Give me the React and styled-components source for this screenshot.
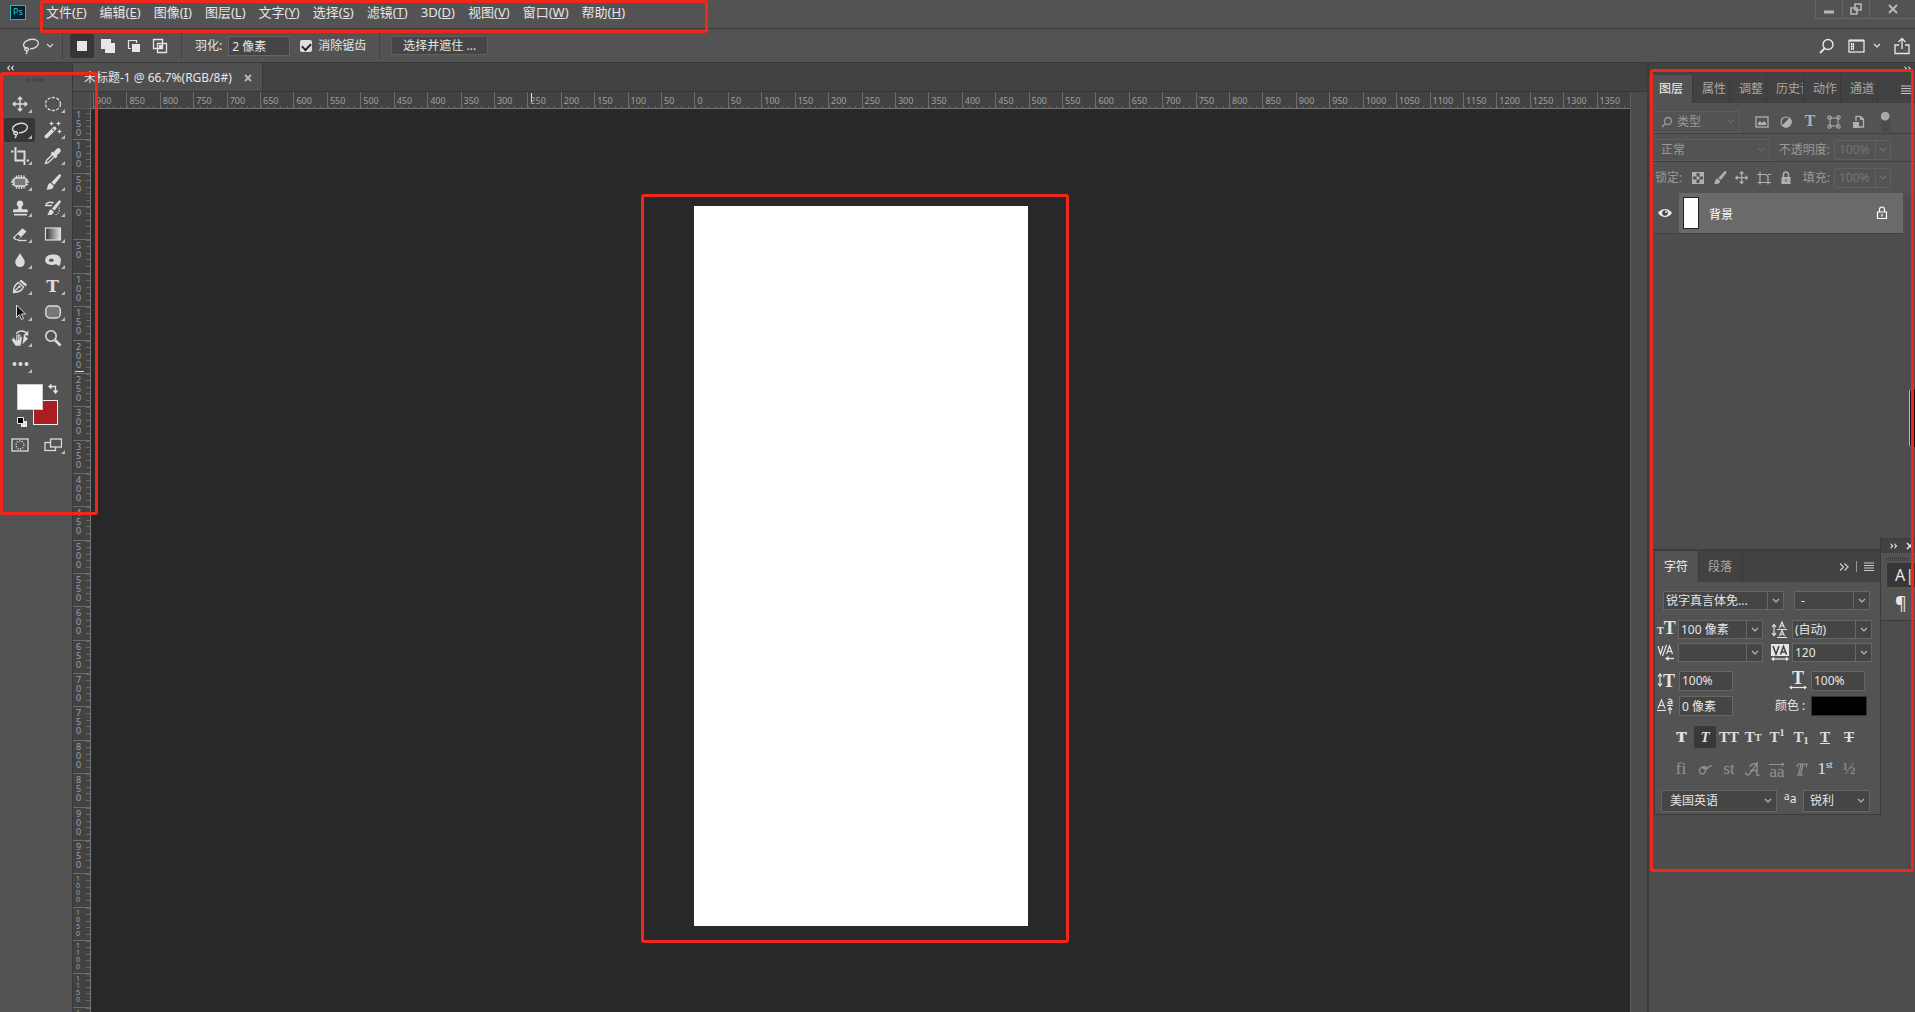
import React, { useState } from "react";
import styled, { createGlobalStyle, css } from "styled-components";

const GlobalStyle = createGlobalStyle`
  * {
    box-sizing: border-box;
  }
  body {
    margin: 0;
    background: #282828;
    color: #e6e6e6;
    font-family: "Noto Sans", "Noto Sans CJK SC", sans-serif;
    font-size: 12px;
    line-height: 16px;
  }
  button, input, select {
    margin: 0;
    padding: 0;
    border: 0;
    border-radius: 0;
    background: none;
    color: inherit;
    font: inherit;
  }
  svg {
    display: block;
    flex: none;
  }
`;

const menus = [
  ["文件", "F"],
  ["编辑", "E"],
  ["图像", "I"],
  ["图层", "L"],
  ["文字", "Y"],
  ["选择", "S"],
  ["滤镜", "T"],
  ["3D", "D"],
  ["视图", "V"],
  ["窗口", "W"],
  ["帮助", "H"],
];

const horizontalMarks = Array.from({ length: 46 }, (_, i) => Math.abs(i - 18) * 50);
const verticalMarks = Array.from({ length: 28 }, (_, i) => Math.abs(i - 3) * 50);

const Icon = ({ w = 18, h = w, children }) => (
  <svg
    width={w}
    height={h}
    viewBox={`0 0 ${w} ${h}`}
    fill="none"
    stroke="currentColor"
    aria-hidden="true"
  >
    {children}
  </svg>
);

const Chevron = () => (
  <Icon w={8} h={6}>
    <path d="M1 1l3 3 3-3" strokeWidth="1.2" />
  </Icon>
);

const DoubleArrow = ({ left, w = 8 }) => (
  <svg width={w} height={w} viewBox="0 0 8 8" fill="currentColor" aria-hidden="true">
    <path
      d={
        left
          ? "M3.8 1v1.6L2.6 4l1.2 1.4V7L1 4zM7.6 1v1.6L6.4 4l1.2 1.4V7L4.8 4z"
          : "M.6 1v1.6L1.8 4 .6 5.4V7l2.8-3zM4.4 1v1.6L5.6 4 4.4 5.4V7l2.8-3z"
      }
    />
  </svg>
);

const Hamburger = () => (
  <Icon w={10} h={9}>
    <path d="M0 1h10M0 3.5h10M0 6h10M0 8.5h10" />
  </Icon>
);

const MoveShape = () => (
  <g>
    <path d="M9 3v12M3 9h12" strokeWidth="1.4" />
    <path
      d="M9 1l3 3.4H6zM9 17l3-3.4H6zM1 9l3.4-3v6zM17 9l-3.4-3v6z"
      fill="currentColor"
      stroke="none"
    />
  </g>
);

const LassoShape = () => (
  <path
    d="M5.2 11.3C2.6 10.6 1.2 9.3 1.6 7.4 2.1 4.6 6 2.4 10 2.3c4-.1 6.8 1.8 6.4 4.4-.4 2.9-4.3 5-8.3 5M5.4 13.4c-1.6.3-2.9-.6-2.6-1.7.3-1 2-1.2 3.1-.5 1.2.8.6 2.4-.4 2.2M4.4 13.4c1.2 1 .8 2.6-.6 3.6"
    strokeWidth="1.4"
  />
);

const BrushShape = () => (
  <g fill="currentColor" stroke="none">
    <path d="M16.6 1.4c.8.6.4 1.7-.5 3L10.4 11.8 7.4 9.4l6.3-6.7c1-1.1 2.1-1.9 2.9-1.3z" />
    <path d="M6.5 10l3 2.5c.3 2.5-2 4.5-7.5 4 1.3-.8 1.3-2 1.7-3.4.4-1.6 1.4-2.9 2.8-3.1z" />
  </g>
);

const tools = [
  { name: "移动工具", corner: true, draw: <MoveShape /> },
  {
    name: "椭圆选框工具",
    corner: true,
    draw: <ellipse cx="9" cy="9" rx="7.5" ry="6.5" strokeDasharray="3 1.5" strokeWidth="1.3" />,
  },
  { name: "套索工具", corner: true, draw: <LassoShape /> },
  {
    name: "魔棒工具",
    corner: true,
    draw: (
      <g>
        <path d="M2.5 15.5L10.5 7.5" strokeWidth="3.8" strokeLinecap="round" />
        <path d="M8.5 8l1.5 1.5" stroke="#535353" strokeWidth="1.2" />
        <path
          d="M7.5 0l.8 1.7 1.7.8-1.7.8-.8 1.7-.8-1.7L5 2.5l1.7-.8zM14.5 0l.8 1.7 1.7.8-1.7.8-.8 1.7-.8-1.7-1.7-.8 1.7-.8zM15.5 8l.8 1.7 1.7.8-1.7.8-.8 1.7-.8-1.7-1.7-.8 1.7-.8z"
          fill="currentColor"
          stroke="none"
        />
      </g>
    ),
  },
  {
    name: "裁剪工具",
    corner: true,
    draw: <path d="M4.5 0v13.5H14M0 4.5h2.5M6.5 4.5h7v8M13.5 14.5V18M15.5 13.5H18" strokeWidth="2" />,
  },
  {
    name: "吸管工具",
    corner: true,
    draw: (
      <g>
        <path d="M9.5 6.5l-7 7L1.5 16.5l3-1 7-7" strokeWidth="1.4" />
        <path d="M7.5 5.5l5 5" strokeWidth="2.6" />
        <path d="M11 7l3.5-3.5" strokeWidth="4.6" strokeLinecap="round" />
      </g>
    ),
  },
  {
    name: "修补工具",
    corner: true,
    draw: (
      <g>
        <rect x="3" y="5" width="12" height="8" rx="1.5" fill="#777" strokeWidth="1.3" />
        <path d="M5.5 2.5V5M8 2V5M10.5 2V5M13 2.5V5M5.5 13v2.5M8 13v3M10.5 13v3M13 13v2.5M1 7h2M0 9h3M1 11.5h2M15 7h2M15 9h3M15 11.5h2" strokeWidth="1.3" />
      </g>
    ),
  },
  { name: "画笔工具", corner: true, draw: <BrushShape /> },
  {
    name: "仿制图章工具",
    corner: true,
    draw: (
      <g fill="currentColor" stroke="none">
        <path d="M9 1.5a3.3 3.3 0 0 1 2.2 5.8c-.8.8-.7 2.2.2 2.9h3.9c1 0 1.5.6 1.5 1.3v1.7H2v-1.7c0-.7.5-1.3 1.5-1.3h3.2c.9-.7 1-2.1.1-2.9A3.3 3.3 0 0 1 9 1.5z" />
        <path d="M3 14.8h13v1.7H3z" />
      </g>
    ),
  },
  {
    name: "历史记录画笔工具",
    corner: true,
    draw: (
      <g>
        <path d="M16.5 1.5c.8.6 0 2-.8 3.2L10.5 11.5 8 9.5l5.5-6.5c1-1.2 2.2-2.1 3-1.5zM7 10.2l2.7 2.2c.2 2.3-2 4-6.7 3.6 2-1.3 1.5-5 4-5.8z" fill="currentColor" stroke="none" />
        <path d="M1 6.5h7M2 5.5C3.5 3 7 2.5 9.5 4" strokeWidth="1.5" />
        <path d="M15 8.5c1.3 3-.5 6.5-4 7.5" strokeDasharray="1.2 1.4" strokeWidth="1.2" />
      </g>
    ),
  },
  {
    name: "橡皮擦工具",
    corner: true,
    draw: (
      <g>
        <path d="M2.5 12L11.5 3.3l4 3.2-8.3 8.7H4.5L2 13z" fill="currentColor" stroke="none" />
        <path d="M4 12l3-2.7 2.8 2.7-2.3 2.3H5z" fill="#535353" stroke="none" />
        <path d="M7 15.5h8.5" strokeWidth="1.3" />
      </g>
    ),
  },
  {
    name: "渐变工具",
    corner: true,
    draw: (
      <g>
        <defs>
          <linearGradient id="fade">
            <stop offset="0" stopColor="#333" />
            <stop offset="1" stopColor="#e4e4e4" />
          </linearGradient>
        </defs>
        <rect x="1.5" y="3" width="15" height="12" fill="url(#fade)" strokeWidth="1.2" />
      </g>
    ),
  },
  {
    name: "模糊工具",
    corner: true,
    draw: <path d="M9 2c1.5 3.5 4.8 6 4.8 9.3a4.8 4.8 0 0 1-9.6 0C4.2 8 7.5 5.5 9 2z" fill="currentColor" stroke="none" />,
  },
  {
    name: "海绵工具",
    corner: true,
    draw: (
      <path
        d="M1.5 7.5C2.5 4 6.5 3 11 3.5c3.5.4 5.8 2.5 6 5.5l-1 5.5h-2.5L12.3 13C8.5 14.8 3.5 14 1.8 11.5c-.7-1-.7-2.6-.3-4zm3.3 2c.2 1.8 4.7 1.8 5-.2.2-2-4.8-2.2-5 .2z"
        fill="currentColor"
        stroke="none"
      />
    ),
  },
  {
    name: "钢笔工具",
    corner: true,
    draw: (
      <g>
        <path d="M2.5 15.5C2.6 11 3.5 7.5 7.5 5.5l5 4.5c-1.8 4-4.5 5-10 5.5zM3 15l4.5-4.7" strokeWidth="1.4" />
        <circle cx="8.3" cy="9.8" r="1.3" fill="currentColor" stroke="none" />
        <path d="M10 2.5l6 5-1.3 2L8.5 4.3z" fill="currentColor" stroke="none" />
      </g>
    ),
  },
  { name: "横排文字工具", corner: true, glyph: "T" },
  {
    name: "路径选择工具",
    corner: true,
    draw: <path d="M5.5 2v12.5l3-2.8 2 4.8 2-1-2-4.5h4z" fill="#111" strokeWidth="1" />,
  },
  {
    name: "圆角矩形工具",
    corner: true,
    draw: <rect x="1.8" y="3" width="14.5" height="12" rx="4" fill="#777" strokeWidth="1.4" />,
  },
  {
    name: "旋转视图工具",
    corner: true,
    draw: (
      <g>
        <path d="M5 4.5C8 1 13 1.3 15.5 4" strokeWidth="1.5" />
        <path d="M17.3 1.5v5h-5zM13 5.8l4 4-5.5 5.5z" fill="currentColor" stroke="none" />
        <path d="M2 7.5l3 4V6c.5-1 1.3-.8 1.5 0V5c.5-1 1.5-.8 1.7 0v1c.5-.8 1.5-.5 1.5.5V8c.6-.7 1.5-.3 1.5.5L10.5 14l-1 3h-5l-4-6c-.2-1 .6-1.4 1.4-.8z" fill="currentColor" stroke="#535353" strokeWidth=".5" />
        <path d="M6.5 6v5M8.2 6.5V11" stroke="#535353" strokeWidth=".6" />
      </g>
    ),
  },
  {
    name: "缩放工具",
    draw: (
      <g>
        <circle cx="7" cy="7" r="5.2" strokeWidth="1.6" />
        <path d="M11 11l5.5 5.5" strokeWidth="2.6" />
      </g>
    ),
  },
  {
    name: "编辑工具栏",
    corner: true,
    draw: (
      <g fill="currentColor" stroke="none">
        <circle cx="3.5" cy="9" r="2" />
        <circle cx="9.5" cy="9" r="2" />
        <circle cx="15.5" cy="9" r="2" />
      </g>
    ),
  },
];

const selectionModes = [
  { name: "新选区", draw: <rect x="3" y="3" width="10" height="10" fill="currentColor" stroke="none" /> },
  {
    name: "添加到选区",
    draw: <path d="M1 1h10v4h4v10H5v-4H1z" fill="currentColor" stroke="none" />,
  },
  {
    name: "从选区减去",
    draw: (
      <g>
        <path d="M5 10.5H2.5v-8h8V5" strokeWidth="1.2" />
        <path d="M6 6h8v8H6z" fill="currentColor" stroke="none" />
      </g>
    ),
  },
  {
    name: "与选区交叉",
    draw: (
      <g>
        <path d="M1.5 1.5h9v9h-9zM5.5 5.5h9v9h-9z" strokeWidth="1.3" />
        <path d="M7 7h3v3H7z" fill="currentColor" stroke="none" />
      </g>
    ),
  },
];

const filterIcons = [
  {
    name: "像素图层",
    draw: (
      <g>
        <rect x="2" y="3" width="12" height="10" strokeWidth="1.3" />
        <path d="M4 11V9l2-2 2 2 2-2 2 2v2z" fill="currentColor" stroke="none" />
      </g>
    ),
  },
  {
    name: "调整图层",
    draw: (
      <g>
        <circle cx="8" cy="8" r="5" strokeWidth="1.2" />
        <path d="M11.8 4.2A5 5 0 0 1 4.4 11.6z" fill="currentColor" />
      </g>
    ),
  },
  { name: "文字图层", glyph: "T" },
  {
    name: "形状图层",
    draw: (
      <g>
        <rect x="4" y="4" width="8" height="8" />
        <path d="M2 2h3v3H2zM11 2h3v3h-3zM2 11h3v3H2zM11 11h3v3h-3z" />
      </g>
    ),
  },
  {
    name: "智能对象",
    draw: (
      <g>
        <path d="M6 7V2.5h4.5L13.5 5v8H9" strokeWidth="1.3" />
        <path d="M10 2v4h4M3 8h6v6H3z" fill="currentColor" stroke="none" />
      </g>
    ),
  },
];

const lockIcons = [
  {
    name: "锁定透明像素",
    draw: (
      <g>
        <rect x="2.5" y="2.5" width="11" height="11" />
        <path d="M3 3h3.5v3.5H3zM9.5 3H13v3.5H9.5zM6.5 6.5h3v3h-3zM3 9.5h3.5V13H3zM9.5 9.5H13V13H9.5z" fill="currentColor" stroke="none" />
      </g>
    ),
  },
  {
    name: "锁定图像像素",
    draw: (
      <g transform="scale(.85)">
        <BrushShape />
      </g>
    ),
  },
  {
    name: "锁定位置",
    draw: (
      <g transform="scale(.85)">
        <MoveShape />
      </g>
    ),
  },
  { name: "防止嵌套", draw: <path d="M4 1.5v13M1 4.5h9l2 2v8M1.5 12.5H15M12 4.5h3" strokeWidth="1.2" /> },
  {
    name: "锁定全部",
    draw: (
      <g>
        <path d="M5.5 7V4.5a2.5 2.5 0 0 1 5 0V7" strokeWidth="1.4" />
        <path d="M3.5 7h9v7h-9z" fill="currentColor" stroke="none" />
        <path d="M7.5 9h1v3h-1z" fill="#535353" stroke="none" />
      </g>
    ),
  },
];

const Ruler = ({ marks, vertical }) => (
  <Marks $vertical={vertical}>
    {marks.map((value, i) => (
      <Mark key={i} $vertical={vertical} $long={value > 950}>
        {value}
      </Mark>
    ))}
    <Pointer $vertical={vertical} />
  </Marks>
);

const Dropdown = ({ label, value, width, tall, faded, boxed, indent }) => (
  <DropdownBox $width={width} $tall={tall} $faded={faded} $indent={indent}>
    <select aria-label={label}>
      <option>{value}</option>
    </select>
    <Caret $boxed={boxed} $faded={faded}>
      <Chevron />
    </Caret>
  </DropdownBox>
);

const OptionBar = () => {
  const [mode, setMode] = useState(0);
  return (
    <Options>
      <LassoButton aria-label="套索工具预设">
        <Icon>
          <LassoShape />
        </Icon>
        <Chevron />
      </LassoButton>
      <Divider />
      <Modes>
        {selectionModes.map((item, i) => (
          <ModeButton key={item.name} aria-label={item.name} $active={mode === i} onClick={() => setMode(i)}>
            <Icon w={16}>{item.draw}</Icon>
          </ModeButton>
        ))}
      </Modes>
      <Divider />
      <FeatherField>
        羽化:
        <input defaultValue="2 像素" />
      </FeatherField>
      <CheckField>
        <input type="checkbox" defaultChecked />
        消除锯齿
      </CheckField>
      <Divider />
      <MaskButton>选择并遮住 ...</MaskButton>
      <OptionsRight>
        <button aria-label="搜索">
          <Icon w={16}>
            <circle cx="9" cy="6.5" r="5" strokeWidth="1.4" />
            <path d="M5.5 10.5L1 15" strokeWidth="1.8" />
          </Icon>
        </button>
        <WorkspaceButton aria-label="工作区">
          <Icon w={17} h={14}>
            <rect x="1" y="1.5" width="15" height="11.5" strokeWidth="1.3" />
            <path d="M1 1.5h15" strokeWidth="2" />
            <path d="M3.5 4v7M5.5 4v7M3 5h3M3 7.5h3M3 10h3" />
          </Icon>
          <Chevron />
        </WorkspaceButton>
        <button aria-label="共享图像">
          <Icon w={16} h={18}>
            <path d="M5 8H1v8.5h14V8h-4M8 12V2M4.5 5L8 1.5 11.5 5" strokeWidth="1.3" />
          </Icon>
        </button>
      </OptionsRight>
    </Options>
  );
};

const ToolPanel = () => {
  const [active, setActive] = useState(2);
  return (
    <Tools>
      <ToolsHead>
        <DoubleArrow left />
      </ToolsHead>
      <Grip $width={20} />
      <ToolGrid>
        {tools.map((tool, i) => (
          <ToolButton
            key={tool.name}
            aria-label={tool.name}
            $active={active === i}
            $corner={tool.corner}
            onClick={() => setActive(i)}
          >
            {tool.glyph ? <ToolGlyph>{tool.glyph}</ToolGlyph> : <Icon>{tool.draw}</Icon>}
          </ToolButton>
        ))}
      </ToolGrid>
      <Swatches>
        <BackColor aria-label="背景色" />
        <FrontColor aria-label="前景色" />
        <SwapColors aria-label="切换前景色和背景色">
          <Icon w={11}>
            <path d="M2 3.5h5.5V9" strokeWidth="1.4" />
            <path d="M0 3.5L3.5.5v6zM7.5 11L4.5 7.5h6z" fill="currentColor" stroke="none" />
          </Icon>
        </SwapColors>
        <ResetColors aria-label="默认前景色和背景色">
          <Icon w={10}>
            <path d="M4 4h6v6H4z" fill="currentColor" stroke="none" />
            <path d="M.5.5h6v6h-6z" fill="#000" />
          </Icon>
        </ResetColors>
      </Swatches>
      <ToolGrid>
        <ToolButton aria-label="快速蒙版">
          <Icon>
            <rect x="1" y="3" width="16" height="12" strokeWidth="1.3" />
            <circle cx="9" cy="9" r="4" strokeDasharray="1.2 1.3" strokeWidth="1.3" />
          </Icon>
        </ToolButton>
        <ToolButton aria-label="更改屏幕模式" $corner>
          <Icon>
            <rect x="1" y="6.5" width="10.5" height="8" strokeWidth="1.3" />
            <rect x="6.5" y="3" width="11" height="8" fill="#535353" strokeWidth="1.3" />
          </Icon>
        </ToolButton>
      </ToolGrid>
      <ToolsOutline />
    </Tools>
  );
};

const LayerPanel = () => (
  <Layers>
    <LayerTabs>
      {["图层", "属性", "调整", "历史记", "动作", "通道"].map((name, i) => (
        <PanelTab key={name} $active={i === 0} $width={i === 0 ? 41 : 37} $indent={i === 0 ? 7 : 9}>
          <span>{name}</span>
        </PanelTab>
      ))}
      <PanelMenu aria-label="图层面板菜单">
        <Hamburger />
      </PanelMenu>
    </LayerTabs>
    <LayerRow $height={31} $top={7}>
      <FilterBox>
        <Icon w={12}>
          <circle cx="7" cy="5" r="3.5" strokeWidth="1.3" />
          <path d="M4.5 7.5L1 11" strokeWidth="1.5" />
        </Icon>
        <Dropdown label="图层过滤" value="类型" faded indent={4} />
      </FilterBox>
      <IconStrip $gap={8} $left={14}>
        {filterIcons.map((item) => (
          <button key={item.name} aria-label={item.name}>
            {item.glyph ? <SmallGlyph>{item.glyph}</SmallGlyph> : <Icon w={16}>{item.draw}</Icon>}
          </button>
        ))}
      </IconStrip>
      <FilterToggle aria-label="打开或关闭图层过滤" />
    </LayerRow>
    <LayerRow $height={28} $top={4}>
      <Dropdown label="混合模式" value="正常" width={118} tall faded indent={8} />
      <Percent>
        不透明度:
        <span>
          <input defaultValue="100%" />
          <i>
            <Chevron />
          </i>
        </span>
      </Percent>
    </LayerRow>
    <LayerRow $height={31} $top={0} $plain>
      <LockLabel>锁定:</LockLabel>
      <IconStrip $gap={6} $left={8}>
        {lockIcons.map((item) => (
          <button key={item.name} aria-label={item.name}>
            <Icon w={16}>{item.draw}</Icon>
          </button>
        ))}
      </IconStrip>
      <Percent>
        填充:
        <span>
          <input defaultValue="100%" />
          <i>
            <Chevron />
          </i>
        </span>
      </Percent>
    </LayerRow>
    <LayerItem>
      <EyeButton aria-label="指示图层可见性">
        <svg width="14" height="10" viewBox="0 0 14 10" aria-hidden="true">
          <path d="M0 5c3.5-5.5 10.5-5.5 14 0-3.5 5.5-10.5 5.5-14 0z" fill="#e6e6e6" />
          <circle cx="7" cy="5" r="2.8" fill="#444" />
          <circle cx="8" cy="4" r="1" fill="#e6e6e6" />
        </svg>
      </EyeButton>
      <LayerName>
        <Thumb />
        <span>背景</span>
        <Icon w={12} h={14}>
          <path d="M3.5 6V3.5a2.5 2.5 0 0 1 5 0V6M1.5 6h9v6.5h-9zM6 8v2.5" strokeWidth="1.2" />
        </Icon>
      </LayerName>
    </LayerItem>
  </Layers>
);

const CharacterPanel = () => (
  <Character>
    <CharacterHead>
      <PanelTab $active $width={44} $indent={9}>
        <span>字符</span>
      </PanelTab>
      <PanelTab $width={44} $indent={9}>
        <span>段落</span>
      </PanelTab>
      <CharacterActions>
        <button aria-label="折叠">
          <Icon w={10}>
            <path d="M1 1.5L4.5 5 1 8.5M5.5 1.5L9 5 5.5 8.5" strokeWidth="1.3" />
          </Icon>
        </button>
        <hr />
        <button aria-label="字符面板菜单">
          <Hamburger />
        </button>
      </CharacterActions>
    </CharacterHead>
    <FontRow>
      <Dropdown label="字体系列" value="锐字真言体免..." width={121} boxed indent={2} />
      <Dropdown label="字体样式" value="-" width={76} boxed indent={6} />
    </FontRow>
    <MetricGrid>
      <Metric>
        <GlyphBox>
          <small>T</small>
          <b>T</b>
        </GlyphBox>
        <Dropdown label="字体大小" value="100 像素" width={85} boxed indent={2} />
      </Metric>
      <Metric>
        <Icon w={17} h={17}>
          <path d="M3 4v10M1 6l2-2.5L5 6M1 12l2 2.5L5 12M6 8.5h10M6 16.5h10" strokeWidth="1.1" />
          <path d="M8.5 7L11 1l2.5 6M9.5 5h3M8.5 15L11 9.5l2.5 5.5M9.5 13.2h3" strokeWidth="1.1" />
        </Icon>
        <Dropdown label="行距" value="(自动)" width={80} boxed indent={2} />
      </Metric>
      <Metric>
        <Icon w={17} h={17}>
          <path d="M1 2l2.5 8L6 2M5.5 12l4-11M9.5 10l3-8 3 8M10.5 7.5h4" strokeWidth="1.2" />
          <path d="M9 14.5h8" strokeWidth="1.3" />
          <path d="M8 14.5l3.5-2.5v5z" fill="currentColor" stroke="none" />
        </Icon>
        <Dropdown label="字距微调" value="" width={85} boxed indent={2} />
      </Metric>
      <Metric>
        <Icon w={18} h={17}>
          <path d="M0 0h18v12H0z" fill="currentColor" stroke="none" />
          <path d="M2 2l3 8 3-8M9.5 10.5l3-8 3 8M10.5 8h4" stroke="#444" strokeWidth="1.6" />
          <path d="M2 15h14" strokeWidth="1.2" />
          <path d="M0 15l3-2.2v4.4zM18 15l-3-2.2v4.4z" fill="currentColor" stroke="none" />
        </Icon>
        <Dropdown label="字距" value="120" width={80} boxed indent={2} />
      </Metric>
    </MetricGrid>
    <ScaleRow>
      <GlyphBox>
        <Icon w={6} h={14}>
          <path d="M3 1v12M1 3.5L3 1l2 2.5M1 10.5L3 13l2-2.5" strokeWidth="1.2" />
        </Icon>
        <b>T</b>
      </GlyphBox>
      <TextInput aria-label="垂直缩放" defaultValue="100%" />
      <WideGlyph>
        <b>T</b>
        <Icon w={18} h={5}>
          <path d="M2 2.5h14" strokeWidth="1.2" />
          <path d="M0 2.5L3 .5v4zM18 2.5L15 .5v4z" fill="currentColor" stroke="none" />
        </Icon>
      </WideGlyph>
      <TextInput aria-label="水平缩放" defaultValue="100%" />
    </ScaleRow>
    <ScaleRow>
      <GlyphBox>
        <Icon w={17} h={16}>
          <path d="M1 10.5L4.5 2 8 10.5M2.3 7.5h4.5M0 12.5h9M10 7.5h6" strokeWidth="1.1" />
          <path d="M11 1.5c3-1 4 0 4 2V6M15 3.5c-4-.5-5 2-3 2.3 1.5.2 3-.6 3-1.5M13 16v-6M11 12l2-2.5 2 2.5" strokeWidth="1.1" />
        </Icon>
      </GlyphBox>
      <TextInput aria-label="基线偏移" defaultValue="0 像素" />
      <ColorLabel>颜色 :</ColorLabel>
      <TextColor aria-label="文本颜色" />
    </ScaleRow>
    <StyleRow>
      <StyleButton aria-label="仿粗体">
        <Heavy>T</Heavy>
      </StyleButton>
      <StyleButton $active aria-label="仿斜体">
        <em>T</em>
      </StyleButton>
      <StyleButton aria-label="全部大写字母">TT</StyleButton>
      <StyleButton aria-label="小型大写字母">
        T<small>T</small>
      </StyleButton>
      <StyleButton aria-label="上标">
        T<sup>1</sup>
      </StyleButton>
      <StyleButton aria-label="下标">
        T<sub>1</sub>
      </StyleButton>
      <StyleButton aria-label="下划线">
        <u>T</u>
      </StyleButton>
      <StyleButton aria-label="删除线">
        <s>T</s>
      </StyleButton>
    </StyleRow>
    <StyleRow $light>
      <StyleButton $dim>fi</StyleButton>
      <StyleButton $dim aria-label="上下文替代字">
        <Icon w={16} h={12}>
          <ellipse cx="5.5" cy="7.5" rx="3" ry="3.5" transform="rotate(25 5.5 7.5)" strokeWidth="1.3" />
          <path d="M5 4c2 3 5 2 7 0 1-1.5 2.5-1.5 3-.5M5 4h5" strokeWidth="1.3" />
        </Icon>
      </StyleButton>
      <StyleButton $dim>st</StyleButton>
      <StyleButton $dim aria-label="花饰字">
        <Icon w={16} h={15}>
          <path d="M1 10c-1 4 3 4 5 0l6-8.5V13c0 1 1.5 1 2.5-.5M5 8.5h7M5 5C5 2 9 1.5 13 1.5" strokeWidth="1.3" />
        </Icon>
      </StyleButton>
      <StyleButton $dim aria-label="文体替代字">
        <ArrowOver>
          <Icon w={16} h={5}>
            <path d="M0 2.5h15M12.5.5L15 2.5l-2.5 2" />
          </Icon>
          aa
        </ArrowOver>
      </StyleButton>
      <StyleButton $dim aria-label="标题替代字">
        <Icon w={13} h={13}>
          <path d="M2 4l1-3h9l-1 3M8 1L5.5 12M6 1L3.5 12M2 12h6" strokeWidth="1.2" />
        </Icon>
      </StyleButton>
      <StyleButton aria-label="序数字">
        1<sup>st</sup>
      </StyleButton>
      <StyleButton $dim>½</StyleButton>
    </StyleRow>
    <LanguageRow>
      <Dropdown label="语言" value="美国英语" width={116} tall indent={8} />
      <AntiAlias>
        <sup>a</sup>a
      </AntiAlias>
      <Dropdown label="消除锯齿方法" value="锐利" width={67} tall indent={6} />
    </LanguageRow>
  </Character>
);

const App = () => {
  return (
    <>
      <GlobalStyle />
      <Window>
        <MenuBar>
          <Logo>Ps</Logo>
          <Menu>
            {menus.map(([name, key]) => (
              <button key={key}>
                {name}(<u>{key}</u>)
              </button>
            ))}
            <MenuOutline />
          </Menu>
          <WindowButtons>
            <button aria-label="最小化">
              <Icon w={12}>
                <path d="M1 9h10" strokeWidth="3" />
              </Icon>
            </button>
            <button aria-label="还原">
              <Icon w={12}>
                <path d="M5 1h6v6H5zM1 5h6v6H1z" strokeWidth="1.6" />
              </Icon>
            </button>
            <CloseButton aria-label="关闭">
              <Icon w={12}>
                <path d="M2 2l8 8M10 2l-8 8" strokeWidth="2" />
              </Icon>
            </CloseButton>
          </WindowButtons>
        </MenuBar>
        <OptionBar />
        <Body>
          <ToolPanel />
          <Document>
            <TabStrip>
              <DocumentTab>
                未标题-1 @ 66.7%(RGB/8#)
                <button aria-label="关闭文档">
                  <Icon w={8}>
                    <path d="M1 1l6 6M7 1L1 7" strokeWidth="2" />
                  </Icon>
                </button>
              </DocumentTab>
            </TabStrip>
            <Workspace>
              <Corner />
              <HorizontalRuler>
                <Ruler marks={horizontalMarks} />
              </HorizontalRuler>
              <ScrollStrip />
              <VerticalRuler>
                <Ruler marks={verticalMarks} vertical />
              </VerticalRuler>
              <Canvas>
                <Artboard>
                  <ArtboardOutline />
                </Artboard>
              </Canvas>
            </Workspace>
          </Document>
          <Dock>
            <DockHead>
              <DoubleArrow />
            </DockHead>
            <LayerPanel />
            <CharacterPanel />
            <Palette>
              <PaletteHead>
                <DoubleArrow />
                <Icon w={8}>
                  <path d="M1 1l6 6M7 1L1 7" strokeWidth="1.6" />
                </Icon>
              </PaletteHead>
              <Grip $width={24} />
              <PaletteButton $active aria-label="字符">
                A|
              </PaletteButton>
              <PaletteButton $large aria-label="段落">
                ¶
              </PaletteButton>
            </Palette>
            <EdgeWidget />
            <DockOutline />
          </Dock>
        </Body>
      </Window>
    </>
  );
};

const Window = styled.div`
  display: flex;
  flex-direction: column;
  height: 100vh;
  overflow: hidden;
  background: #535353;
`;

const Outline = styled.div`
  position: absolute;
  z-index: 5;
  border: 3px solid #f0271b;
  border-radius: 3px;
  pointer-events: none;
`;

const MenuBar = styled.header`
  display: flex;
  height: 29px;
  padding-left: 10px;
  border-bottom: 1px solid #383838;
`;
const Logo = styled.div`
  width: 16px;
  height: 15px;
  margin-top: 5px;
  border: 1px solid #2bb5c0;
  background: #04222f;
  color: #2fc3d3;
  font-size: 9px;
  line-height: 12px;
  text-align: center;
`;
const Menu = styled.nav`
  position: relative;
  display: flex;
  align-items: flex-start;
  gap: 13px;
  margin-left: 20px;
  padding-top: 3px;
  button {
    font-size: 13px;
    line-height: 18px;
    white-space: nowrap;
  }
`;
const MenuOutline = styled(Outline)`
  top: 0;
  left: -6px;
  right: -83px;
  height: 33px;
`;
const WindowButtons = styled.div`
  display: flex;
  height: 19px;
  margin-left: auto;
  color: #b8b8b8;
  button {
    display: flex;
    align-items: center;
    justify-content: center;
    width: 27px;
    border: solid #666;
    border-width: 0 0 1px 1px;
  }
`;
const CloseButton = styled.button`
  && {
    width: 46px;
  }
`;

const Options = styled.div`
  display: flex;
  align-items: center;
  height: 34px;
  padding: 0 5px 0 22px;
  border-bottom: 1px solid #383838;
`;
const Divider = styled.hr`
  width: 1px;
  height: 26px;
  margin: 0;
  border: 0;
  background: #424242;
`;
const LassoButton = styled.button`
  display: flex;
  align-items: center;
  gap: 6px;
  width: 40px;
  color: #d8d8d8;
`;
const Modes = styled.div`
  display: flex;
  gap: 2px;
  padding: 0 9px 0 7px;
`;
const ModeButton = styled.button`
  display: flex;
  align-items: center;
  justify-content: center;
  width: 24px;
  height: 24px;
  border-radius: 2px;
  background: ${(props) => (props.$active ? "#363636" : "none")};
`;
const FeatherField = styled.label`
  display: flex;
  align-items: center;
  gap: 6px;
  padding-left: 13px;
  input {
    width: 62px;
    height: 20px;
    padding-left: 3px;
    border: 1px solid #646464;
    background: #454545;
  }
`;
const CheckField = styled.label`
  display: flex;
  align-items: center;
  gap: 6px;
  padding: 0 13px 0 10px;
  input {
    display: grid;
    place-items: center;
    width: 12px;
    height: 12px;
    border-radius: 2px;
    background: #dedede;
    appearance: none;
  }
  input:checked::after {
    content: "";
    width: 7px;
    height: 4px;
    border: solid #222;
    border-width: 0 0 2px 2px;
    transform: rotate(-45deg);
  }
`;
const MaskButton = styled.button`
  width: 97px;
  height: 19px;
  margin-left: 11px;
  border: 1px solid #5e5e5e;
  border-radius: 2px;
  background: #454545;
  line-height: 16px;
`;
const OptionsRight = styled.div`
  display: flex;
  align-items: center;
  gap: 13px;
  margin-left: auto;
`;
const WorkspaceButton = styled.button`
  display: flex;
  align-items: center;
  gap: 8px;
`;

const Body = styled.main`
  display: flex;
  flex: 1;
  min-height: 0;
`;
const Tools = styled.aside`
  position: relative;
  flex: none;
  width: 73px;
  border-right: 1px solid #383838;
`;
const ToolsOutline = styled(Outline)`
  top: 9px;
  left: 0;
  width: 98px;
  height: 443px;
`;
const ToolsHead = styled.div`
  display: flex;
  align-items: center;
  height: 10px;
  padding-left: 6px;
  background: #424242;
`;
const Grip = styled.div`
  width: ${(props) => props.$width}px;
  height: 4px;
  margin: 5px auto;
  background: repeating-linear-gradient(90deg, #404040 0 1px, transparent 1px 2px);
`;
const ToolGrid = styled.div`
  display: grid;
  grid-template-columns: 31px 31px;
  grid-auto-rows: 24px;
  gap: 2px;
  padding: 5px 0 0 4px;
`;
const ToolButton = styled.button`
  display: grid;
  place-items: center;
  border-radius: 2px;
  color: #dcdcdc;
  ${(props) =>
    props.$active &&
    css`
      background: #363636;
    `}
  > * {
    grid-area: 1 / 1;
  }
  ${(props) =>
    props.$corner &&
    css`
      &::after {
        content: "";
        grid-area: 1 / 1;
        place-self: end;
        margin: 0 3px 3px 0;
        border: 2px solid transparent;
        border-right-color: #bbb;
        border-bottom-color: #bbb;
      }
    `}
`;
const ToolGlyph = styled.span`
  font: bold 17px/20px "DejaVu Serif", serif;
`;
const Swatches = styled.div`
  position: relative;
  height: 52px;
`;
const FrontColor = styled.button`
  position: absolute;
  top: 8px;
  left: 17px;
  width: 26px;
  height: 26px;
  border: 1px solid #ccc;
  background: #fff;
`;
const BackColor = styled.button`
  position: absolute;
  top: 24px;
  left: 33px;
  width: 25px;
  height: 25px;
  border: 1px solid #eee;
  background: #a81e22;
`;
const SwapColors = styled.button`
  position: absolute;
  top: 7px;
  left: 48px;
`;
const ResetColors = styled.button`
  position: absolute;
  top: 41px;
  left: 17px;
`;

const Document = styled.section`
  display: flex;
  flex: 1;
  flex-direction: column;
  min-width: 0;
`;
const TabStrip = styled.div`
  display: flex;
  height: 29px;
  border-bottom: 1px solid #383838;
  background: #424242;
`;
const DocumentTab = styled.div`
  display: flex;
  align-items: center;
  gap: 12px;
  padding: 2px 10px 0 11px;
  border-right: 1px solid #383838;
  background: #4f4f4f;
  white-space: nowrap;
  button {
    color: #b4b4b4;
  }
`;
const Workspace = styled.div`
  display: grid;
  flex: 1;
  grid-template: 17px minmax(0, 1fr) / 18px minmax(0, 1fr) 17px;
  min-height: 0;
  background: #4b4b4b;
`;
const Corner = styled.div`
  border-right: 1px dotted #6a6a6a;
  border-bottom: 1px dotted #6a6a6a;
`;
const HorizontalRuler = styled.div`
  padding-left: 2px;
  border-bottom: 1px solid #757575;
  background: #424242;
`;
const VerticalRuler = styled.div`
  overflow: hidden;
  border-right: 1px solid #757575;
  background: #424242;
`;
const ScrollStrip = styled.div`
  grid-row: 1 / 3;
  grid-column: 3;
  border-left: 1px solid #5c5c5c;
  background: #4b4b4b;
`;
const Marks = styled.div`
  position: relative;
  display: grid;
  ${(props) =>
    props.$vertical
      ? css`
          grid-template-rows: repeat(28, minmax(0, 1fr));
          height: 934px;
          margin-top: -3px;
        `
      : css`
          grid-template-columns: repeat(46, minmax(0, 1fr));
          height: 100%;
        `}
`;
const Mark = styled.div`
  color: #a0a0a0;
  font-size: 9px;
  ${(props) =>
    props.$vertical
      ? css`
          padding: 1px 8px 0 3px;
          border-top: 1px solid #6c6c6c;
          background: repeating-linear-gradient(#686868 0 1px, transparent 1px 20%) right / 4px 100% no-repeat;
          font-size: ${props.$long ? 7 : 9}px;
          line-height: ${props.$long ? 7 : 9}px;
          word-break: break-all;
          &:first-child {
            padding-top: 3px;
          }
        `
      : css`
          padding-left: 2px;
          border-left: 1px solid #6c6c6c;
          background: repeating-linear-gradient(90deg, #686868 0 1px, transparent 1px 20%) bottom / 100% 3px no-repeat;
          line-height: 17px;
        `}
`;
const Pointer = styled.div`
  position: absolute;
  background: #ddd;
  ${(props) =>
    props.$vertical
      ? css`
          top: 265px;
          left: 2px;
          width: 9px;
          height: 1px;
        `
      : css`
          top: 1px;
          left: 438px;
          width: 1px;
          height: 9px;
        `}
`;
const Canvas = styled.div`
  display: flex;
  align-items: flex-start;
  justify-content: center;
  padding-top: 97px;
  background: #282828;
`;
const Artboard = styled.div`
  position: relative;
  width: 334px;
  height: 720px;
  background: #fff;
`;
const ArtboardOutline = styled(Outline)`
  top: -12px;
  right: -41px;
  bottom: -17px;
  left: -53px;
`;

const Dock = styled.aside`
  position: relative;
  display: flex;
  flex: none;
  flex-direction: column;
  width: 268px;
  border-left: 2px solid #3c3c3c;
  background: #4d4d4d;
`;
const DockOutline = styled(Outline)`
  top: 6px;
  right: 1px;
  left: 1px;
  height: 803px;
`;
const DockHead = styled.div`
  display: flex;
  align-items: center;
  justify-content: flex-end;
  height: 12px;
  padding-right: 3px;
  background: #424242;
`;
const Layers = styled.section`
  height: 476px;
  margin-left: 3px;
  border-bottom: 2px solid #3c3c3c;
`;
const LayerTabs = styled.div`
  display: flex;
  height: 28px;
  background: #424242;
`;
const PanelTab = styled.button`
  width: ${(props) => props.$width}px;
  padding-left: ${(props) => props.$indent}px;
  border-right: 1px solid #3a3a3a;
  background: ${(props) => (props.$active ? "#535353" : "none")};
  color: ${(props) => (props.$active ? "#f2f2f2" : "#a8a8a8")};
  text-align: left;
  span {
    display: block;
    width: 27px;
    overflow: hidden;
    white-space: nowrap;
  }
`;
const PanelMenu = styled.button`
  margin-left: auto;
  padding-right: 4px;
  color: #c4c4c4;
`;
const LayerRow = styled.div`
  display: flex;
  align-items: center;
  height: ${(props) => props.$height}px;
  padding-top: ${(props) => props.$top}px;
  border-bottom: ${(props) => (props.$plain ? 0 : 1)}px solid #404040;
  background: #535353;
  color: #999;
`;
const DropdownBox = styled.div`
  display: grid;
  align-items: center;
  width: ${(props) => (props.$width ? `${props.$width}px` : "auto")};
  height: ${(props) => (props.$tall ? 22 : 19)}px;
  border: 1px solid ${(props) => (props.$faded ? "#5e5e5e" : "#666")};
  background: ${(props) => (props.$faded ? "none" : "#454545")};
  > * {
    grid-area: 1 / 1;
  }
  select {
    width: 100%;
    height: 100%;
    padding-left: ${(props) => props.$indent}px;
    line-height: 16px;
    appearance: none;
  }
`;
const Caret = styled.span`
  display: flex;
  align-items: center;
  justify-content: center;
  justify-self: end;
  width: 16px;
  height: 100%;
  border-left: ${(props) => (props.$boxed ? "1px solid #777" : 0)};
  opacity: ${(props) => (props.$faded ? 0.3 : 0.7)};
  pointer-events: none;
`;
const FilterBox = styled.div`
  display: flex;
  align-items: center;
  width: 88px;
  height: 22px;
  padding-left: 8px;
  border: 1px solid #5e5e5e;
  ${DropdownBox} {
    flex: 1;
    border: 0;
  }
`;
const IconStrip = styled.div`
  display: flex;
  gap: ${(props) => props.$gap}px;
  padding-left: ${(props) => props.$left}px;
  color: #b0b0b0;
  button {
    width: 16px;
  }
`;
const SmallGlyph = styled.span`
  font: bold 14px/16px "DejaVu Serif", serif;
`;
const FilterToggle = styled.button`
  width: 9px;
  height: 20px;
  margin-left: 15px;
  border-radius: 4px;
  background: radial-gradient(circle at 4px 4px, #aaa 4px, #4b4b4b 5px);
`;
const Percent = styled.label`
  display: flex;
  align-items: center;
  justify-content: flex-end;
  gap: 4px;
  margin: 0 24px 0 auto;
  span {
    display: flex;
    width: 57px;
    height: 20px;
    border: 1px solid #606060;
    border-radius: 2px;
    color: #757575;
  }
  input {
    width: 40px;
    padding-left: 4px;
  }
  i {
    display: grid;
    flex: 1;
    place-items: center;
    border-left: 1px solid #606060;
  }
`;
const LockLabel = styled.span`
  padding-left: 3px;
`;
const LayerItem = styled.div`
  display: flex;
  height: 41px;
  margin-right: 12px;
  border-bottom: 1px solid #404040;
`;
const EyeButton = styled.button`
  display: grid;
  flex: none;
  place-items: center;
  width: 27px;
  padding-right: 2px;
  background: #535353;
`;
const LayerName = styled.div`
  display: flex;
  flex: 1;
  align-items: center;
  gap: 10px;
  padding: 0 15px 0 4px;
  background: #6a6a6a;
  color: #fff;
  span {
    padding-top: 3px;
  }
  svg {
    margin-left: auto;
  }
`;
const Thumb = styled.div`
  width: 16px;
  height: 32px;
  border: 1px solid #222;
  background: #fff;
`;

const Character = styled.section`
  display: flex;
  flex-direction: column;
  width: 227px;
  height: 264px;
  margin-left: 5px;
  border: solid #3c3c3c;
  border-width: 0 1px 1px;
  background: #535353;
`;
const CharacterHead = styled.div`
  display: flex;
  height: 31px;
  background: #424242;
`;
const CharacterActions = styled.div`
  display: flex;
  align-items: center;
  gap: 7px;
  margin-left: auto;
  padding-right: 6px;
  color: #c8c8c8;
  hr {
    width: 1px;
    height: 11px;
    margin: 0;
    border: 0;
    background: #999;
  }
`;
const FontRow = styled.div`
  display: flex;
  gap: 10px;
  padding: 9px 0 0 8px;
`;
const MetricGrid = styled.div`
  display: grid;
  grid-template-columns: 106px 101px;
  grid-auto-rows: 19px;
  gap: 4px 8px;
  padding: 10px 0 0 2px;
`;
const Metric = styled.div`
  display: flex;
  align-items: center;
  justify-content: space-between;
`;
const GlyphBox = styled.span`
  display: flex;
  align-items: baseline;
  width: 18px;
  font: 18px/18px "Liberation Serif", serif;
  small {
    font-size: 10px;
    font-weight: bold;
  }
`;
const ScaleRow = styled.div`
  display: flex;
  align-items: center;
  height: 25px;
  padding-left: 2px;
  &:nth-of-type(4) {
    margin-top: 6px;
  }
`;
const TextInput = styled.input`
  width: 54px;
  height: 20px;
  margin-left: 4px;
  padding-left: 2px;
  border: 1px solid #666;
  background: #454545;
`;
const WideGlyph = styled.span`
  display: flex;
  flex-direction: column;
  align-items: center;
  margin-left: 56px;
  font: 18px/13px "Liberation Serif", serif;
`;
const ColorLabel = styled.span`
  width: 32px;
  margin-left: 42px;
  white-space: nowrap;
`;
const TextColor = styled.button`
  width: 56px;
  height: 20px;
  margin-left: 4px;
  border: 1px solid #333;
  background: #000;
`;
const StyleRow = styled.div`
  display: flex;
  gap: 2px;
  height: 22px;
  margin: ${(props) => (props.$light ? 10 : 8)}px 0 0 15px;
  font-family: "Liberation Serif", serif;
  font-size: ${(props) => (props.$light ? 17 : 15)}px;
  font-weight: ${(props) => (props.$light ? 400 : 700)};
`;
const Heavy = styled.b`
  text-shadow: 1px 0 currentColor;
`;
const StyleButton = styled.button`
  display: flex;
  align-items: center;
  justify-content: center;
  width: 22px;
  border-radius: 2px;
  background: ${(props) => (props.$active ? "#383838" : "none")};
  color: ${(props) => (props.$dim ? "#939393" : "#e0e0e0")};
  small, sup, sub {
    font-size: 10px;
    line-height: 10px;
  }
  small {
    align-self: flex-end;
    padding-bottom: 5px;
  }
  sup {
    align-self: flex-start;
    padding-top: 2px;
  }
  sub {
    align-self: flex-end;
    padding-bottom: 2px;
  }
`;
const ArrowOver = styled.span`
  display: flex;
  flex-direction: column;
  align-items: center;
  line-height: 10px;
`;
const LanguageRow = styled.div`
  display: flex;
  gap: 7px;
  margin: 10px 0 0 6px;
`;
const AntiAlias = styled.span`
  display: flex;
  width: 12px;
  line-height: 18px;
  sup {
    font-size: 10px;
    line-height: 12px;
  }
`;

const Palette = styled.div`
  position: absolute;
  top: 475px;
  right: 0;
  width: 35px;
  height: 83px;
  overflow: hidden;
  border: 1px solid #3a3a3a;
  border-right: 0;
  background: #535353;
  ${Grip} {
    margin: 4px auto 2px;
  }
`;
const PaletteHead = styled.div`
  display: flex;
  align-items: center;
  gap: 8px;
  height: 14px;
  padding-left: 9px;
  background: #424242;
`;
const PaletteButton = styled.button`
  display: block;
  width: 28px;
  height: 24px;
  margin: 0 0 4px 6px;
  padding-left: 8px;
  background: ${(props) => (props.$active ? "#363636" : "none")};
  font-size: ${(props) => (props.$large ? 18 : 16)}px;
  line-height: 24px;
  text-align: left;
  white-space: nowrap;
`;
const EdgeWidget = styled.div`
  position: absolute;
  top: 326px;
  right: 0;
  width: 6px;
  height: 58px;
  border-left: 1px solid #d8b0b0;
  border-radius: 3px 0 0 3px;
  background: #111;
`;

export default App;
